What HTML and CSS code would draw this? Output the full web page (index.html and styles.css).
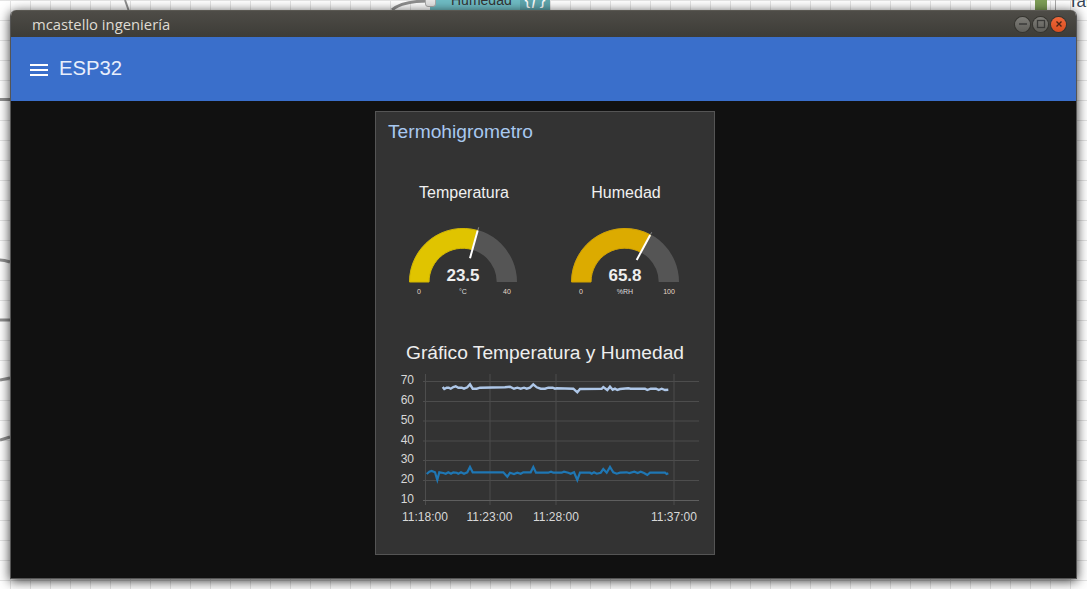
FILE: index.html
```html
<!DOCTYPE html>
<html lang="en">
<head>
    <meta charset="UTF-8">
    <title>mcastello ingeniería</title>
    <link rel="stylesheet" href="styles.css">
</head>
<body>
    <div class="desktop">
        <svg class="canvas-wires" width="1087" height="589" viewBox="0 0 1087 589">
            <g fill="none" stroke="#8f8f8f" stroke-width="3">
                <path d="M392 10 C400 3 412 1 428 1"/>
                <path d="M125 0 L128.5 10" stroke-width="2"/>
                <path d="M0 99.5 L10 99.5"/>
                <path d="M0 260 C4 260 7 261 10 262"/>
                <path d="M0 320 L10 320"/>
                <path d="M0 380 L10 378"/>
                <path d="M0 440 L10 437"/>
            </g>
            <line x1="1055.5" y1="0" x2="1055.5" y2="10" stroke="#aaa"/>
        </svg>
        <div class="flow-node">
            <span class="flow-node-label">Humedad</span>
            <span class="flow-node-func">{ƒ}</span>
        </div>
        <div class="flow-port"></div>
        <div class="flow-green"></div>
        <div class="flow-tab">Tal</div>

        <div class="window">
            <div class="titlebar">
                <span class="title">mcastello ingeniería</span>
                <div class="win-buttons">
                    <span class="win-btn">
                        <svg width="12" height="12" viewBox="0 0 12 12"><path d="M2 6H10" stroke="#3a3a38" stroke-width="1.5"/></svg>
                    </span>
                    <span class="win-btn">
                        <svg width="12" height="12" viewBox="0 0 12 12"><rect x="2.5" y="2.5" width="7" height="7" fill="none" stroke="#3a3a38" stroke-width="1.3"/></svg>
                    </span>
                    <span class="win-btn win-close">
                        <svg width="12" height="12" viewBox="0 0 12 12"><path d="M3.5 3.5L8.5 8.5M8.5 3.5L3.5 8.5" stroke="#4a2414" stroke-width="1.4"/></svg>
                    </span>
                </div>
            </div>
            <div class="toolbar">
                <div class="menu-icon"><span></span><span></span><span></span></div>
                <div class="toolbar-title">ESP32</div>
            </div>
            <div class="content">
                <div class="card">
                    <div class="card-title">Termohigrometro</div>
                    <div class="gauges">
                        <div class="gauge">
                            <div class="gauge-label">Temperatura</div>
                            <svg width="162" height="80" viewBox="0 0 162 80">
                                <path d="M27 61 A54 54 0 0 1 135 61 L114.7 61 A33.7 33.7 0 0 0 47.3 61 Z" fill="#555"/>
                                <path d="M27.5 61 A53.5 53.5 0 0 1 95.6 9.5 L90.1 28.6 A33.7 33.7 0 0 0 47 61 Z" fill="#e0c400" stroke="#d2b700"/>
                                <line x1="96.7" y1="6.3" x2="95.9" y2="9" stroke="#888" stroke-width="1"/>
                                <line x1="95.7" y1="9.5" x2="88" y2="37.3" stroke="#fff" stroke-width="2"/>
                                <text x="81" y="60" class="gauge-value">23.5</text>
                                <text x="81" y="73" class="gauge-unit">°C</text>
                                <text x="37" y="72.5" class="gauge-min">0</text>
                                <text x="125" y="72.5" class="gauge-max">40</text>
                            </svg>
                        </div>
                        <div class="gauge">
                            <div class="gauge-label">Humedad</div>
                            <svg width="162" height="80" viewBox="0 0 162 80">
                                <path d="M27 61 A54 54 0 0 1 135 61 L114.7 61 A33.7 33.7 0 0 0 47.3 61 Z" fill="#555"/>
                                <path d="M27.5 61 A53.5 53.5 0 0 1 106.6 14 L97 31.4 A33.7 33.7 0 0 0 47 61 Z" fill="#dcab00" stroke="#d1a200"/>
                                <line x1="107.7" y1="11.3" x2="106.4" y2="13.7" stroke="#888" stroke-width="1"/>
                                <line x1="106.2" y1="14" x2="92.7" y2="39" stroke="#fff" stroke-width="2"/>
                                <text x="81" y="60" class="gauge-value">65.8</text>
                                <text x="81" y="73" class="gauge-unit">%RH</text>
                                <text x="37" y="72.5" class="gauge-min">0</text>
                                <text x="125" y="72.5" class="gauge-max">100</text>
                            </svg>
                        </div>
                    </div>
                    <div class="chart-title">Gráfico Temperatura y Humedad</div>
                    <svg class="chart" width="338" height="170" viewBox="0 0 338 170">
                        <g stroke="#4d4d4d" stroke-width="1">
                            <line x1="47" y1="14.5" x2="323" y2="14.5"/>
                            <line x1="47" y1="34.5" x2="323" y2="34.5"/>
                            <line x1="47" y1="54" x2="323" y2="54"/>
                            <line x1="47" y1="74" x2="323" y2="74"/>
                            <line x1="47" y1="93.5" x2="323" y2="93.5"/>
                            <line x1="47" y1="113.5" x2="323" y2="113.5"/>
                            <line x1="49.5" y1="7" x2="49.5" y2="138"/>
                            <line x1="114" y1="7" x2="114" y2="138"/>
                            <line x1="180" y1="7" x2="180" y2="138"/>
                            <line x1="298" y1="7" x2="298" y2="138"/>
                        </g>
                        <line x1="47" y1="133.5" x2="323" y2="133.5" stroke="#5f5f5f"/>
                        <polyline fill="none" stroke="#aec7e8" stroke-width="2.4" points="66.7,20 68.3,22 70.7,20.7 72.7,20.7 74.7,21.7 77.3,20 79.7,19.3 82.3,20.7 85.7,20.7 88,21.7 91.3,20.3 94,17.3 96.7,21.7 100.7,21.7 104,20.7 129,20.3 134,19.7 138,21.7 141.3,20.7 144.7,21.7 148,20.7 150.7,21.7 154,20.7 157.3,17.3 160.7,20.3 164.7,21.7 169,21.7 172.3,20.7 176.7,20.7 179,21.7 180.7,21.3 197.3,21.7 201.3,25.3 204,22 225.7,21.7 227.3,20 231.3,23 234,19.7 236.7,22.7 239,21.7 241.3,23 244,22 252.3,21.3 254.7,21.7 269,21.7 271.3,23 274.7,21.7 280,21.7 282.7,23 285.7,21.7 289,23 292.3,22.7"/>
                        <polyline fill="none" stroke="#1f77b4" stroke-width="2.2" points="50.7,107 53.3,104.7 55.7,104 59,105.3 61.3,113 63.3,105.3 67.3,106 69.7,106.7 72.3,105.3 75,106.7 77.3,105.3 80.7,105.7 82.3,106.7 85,105.3 88,106.7 91.3,105.3 94,100 96.7,105.3 127.3,105.3 131.3,109.7 134,105.7 138,107 141.3,105.7 144.7,106.7 147.3,105.3 154.7,105.3 157.3,100 160,105.7 172.3,105.7 175,104.7 177.3,105.7 185.7,105.7 188,104.7 192.3,105.7 194.7,106.7 198,105.3 201.3,113 204,105.7 214,105.7 215.7,106.7 218,105.3 220.7,106.7 224.7,105.7 227.3,102 230.7,105.7 234,100 237.3,105.3 240.7,106.7 244,105.7 250.7,105.3 253.3,106 258.3,104.7 261.7,106 264.7,104.7 268,106 271.3,108 274,105.7 289,105.7 290.7,107 292.3,106.3"/>
                        <g class="chart-axis">
                            <text x="38" y="17" text-anchor="end">70</text>
                            <text x="38" y="36.5" text-anchor="end">60</text>
                            <text x="38" y="56.5" text-anchor="end">50</text>
                            <text x="38" y="77" text-anchor="end">40</text>
                            <text x="38" y="96" text-anchor="end">30</text>
                            <text x="38" y="116" text-anchor="end">20</text>
                            <text x="38" y="135.5" text-anchor="end">10</text>
                            <text x="49" y="154" text-anchor="middle">11:18:00</text>
                            <text x="113.5" y="154" text-anchor="middle">11:23:00</text>
                            <text x="180" y="154" text-anchor="middle">11:28:00</text>
                            <text x="298" y="154" text-anchor="middle">11:37:00</text>
                        </g>
                    </svg>
                </div>
            </div>
        </div>
    </div>
</body>
</html>
```

FILE: styles.css
```css
body {
    margin: 0;
    overflow: hidden;
    background-color: #fff;
    font-family: "Liberation Sans", Arial, sans-serif;
}
.desktop {
    position: relative;
    width: 1087px;
    height: 589px;
    overflow: hidden;
    background-color: #fff;
    background-image:
        linear-gradient(#e4e4e4 1px, transparent 1px),
        linear-gradient(90deg, #e4e4e4 1px, transparent 1px);
    background-size: 20px 20px;
    background-position: 10px 0;
}
.canvas-wires {
    position: absolute;
    left: 0;
    top: 0;
}
.flow-node {
    position: absolute;
    left: 430px;
    top: -11px;
    width: 120px;
    height: 22px;
    display: flex;
    background-color: #6fbcc4;
    color: #333;
    font-size: 14px;
    line-height: 22px;
}
.flow-node-label {
    flex: 1;
    padding-left: 21px;
}
.flow-node-func {
    width: 30px;
    background-color: #5fa6ad;
    color: #fff;
    font-size: 17px;
    text-align: center;
}
.flow-port {
    position: absolute;
    left: 425px;
    top: -4px;
    width: 9px;
    height: 9px;
    background-color: #e6e6e6;
    border: 1px solid #aaa;
    border-radius: 3px;
}
.flow-green {
    position: absolute;
    left: 1035px;
    top: 0;
    width: 12px;
    height: 10px;
    background-color: #7d9e57;
}
.flow-tab {
    position: absolute;
    left: 1068px;
    top: -8px;
    font-size: 17px;
    color: #345;
}
.window {
    position: absolute;
    left: 10px;
    top: 10px;
    width: 1067px;
    height: 569px;
    box-sizing: border-box;
    display: flex;
    flex-direction: column;
    border: 1px solid #555;
    border-top: 0;
    border-radius: 6px 6px 0 0;
    overflow: hidden;
    box-shadow: 0 2px 12px rgba(0,0,0,0.8);
}
.titlebar {
    height: 27px;
    flex: none;
    display: flex;
    align-items: center;
    justify-content: space-between;
    box-sizing: border-box;
    padding: 0 10px 0 21px;
    border-top: 1px solid #5a5852;
    background: linear-gradient(#4e4c47, #3d3c37);
}
.title {
    color: #dfdbd2;
    font-family: "Open Sans", "Noto Sans", sans-serif;
    font-size: 14.8px;
}
.win-buttons {
    display: flex;
    gap: 3px;
}
.win-btn {
    width: 15px;
    height: 15px;
    display: flex;
    align-items: center;
    justify-content: center;
    border-radius: 50%;
    background: linear-gradient(#7e7d78, #5f5e59);
    box-shadow: 0 0 0 1px #35342f;
}
.win-close {
    background: linear-gradient(#f0683a, #d94d1f);
}
.toolbar {
    height: 64px;
    flex: none;
    display: flex;
    align-items: center;
    background-color: #3a6fcb;
    box-sizing: border-box;
}
.menu-icon {
    display: flex;
    flex-direction: column;
    gap: 3px;
    width: 18px;
    margin-left: 19px;
    margin-top: 2px;
}
.menu-icon span {
    height: 2px;
    background-color: #fff;
}
.toolbar-title {
    margin-left: 11px;
    margin-bottom: 2px;
    color: #e8eefb;
    font-size: 20.3px;
}
.content {
    flex: 1;
    background-color: #111;
    display: flex;
    justify-content: center;
    padding-top: 10px;
}
.card {
    width: 338px;
    height: 442px;
    margin-left: 3px;
    background-color: #333;
    border: 1px solid #555;
}
.card-title {
    padding: 9px 12px 0;
    color: #a8c8f0;
    font-size: 19.2px;
    line-height: 22px;
}
.gauges {
    display: flex;
    margin-top: 41px;
    padding-left: 6px;
}
.gauge {
    width: 162px;
}
.gauge svg {
    display: block;
    margin-top: 19px;
}
.gauge-label {
    padding-left: 2px;
    color: #f0f0f0;
    font-size: 16px;
    line-height: 18px;
    text-align: center;
}
.gauge-value {
    fill: #eee;
    font-size: 17px;
    font-weight: bold;
    text-anchor: middle;
}
.gauge-unit {
    fill: #ddd;
    font-size: 7px;
    text-anchor: middle;
}
.gauge-min,
.gauge-max {
    fill: #e8d8c8;
    font-size: 7px;
    text-anchor: middle;
}
.chart-title {
    margin-top: 41px;
    color: #eee;
    font-size: 19.2px;
    line-height: 22px;
    text-align: center;
}
.chart {
    display: block;
    margin-top: 3px;
}
.chart-axis text {
    fill: #d8d8d8;
    font-family: "Liberation Sans", sans-serif;
    font-size: 12px;
}
```
